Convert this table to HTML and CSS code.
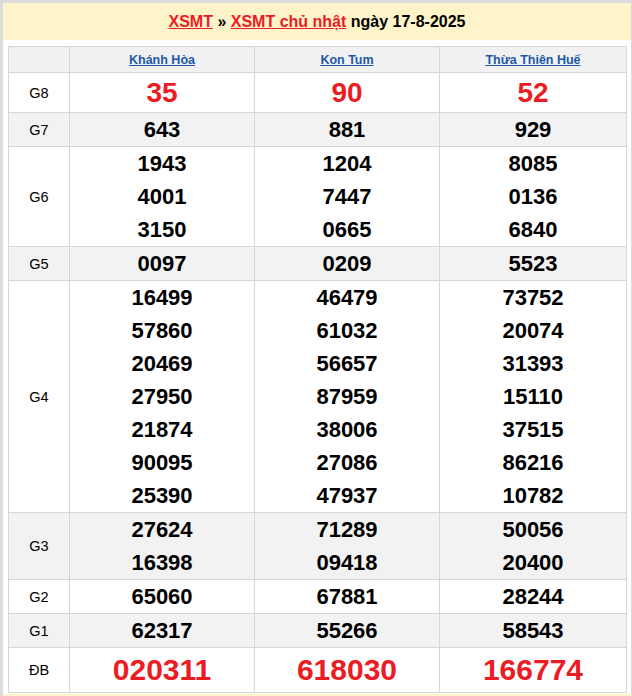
FILE: index.html
```html
<!DOCTYPE html>
<html lang="vi">
<head>
<meta charset="utf-8">
<title>XSMT chủ nhật 17-8-2025</title>
<link rel="stylesheet" href="styles.css">
</head>
<body>
<div class="box">
  <h2 class="title"><a href="#">XSMT</a> » <a href="#">XSMT chủ nhật</a> ngày 17-8-2025</h2>
  <table class="kq">
    <colgroup><col class="c-label"><col class="c-prov"><col class="c-prov"><col class="c-last"></colgroup>
    <thead>
      <tr class="head"><th></th><th><a href="#">Khánh Hòa</a></th><th><a href="#">Kon Tum</a></th><th><a href="#">Thừa Thiên Huế</a></th></tr>
    </thead>
    <tbody>
      <tr class="g8"><td class="lbl">G8</td><td><div>35</div></td><td><div>90</div></td><td><div>52</div></td></tr>
      <tr class="alt"><td class="lbl">G7</td><td><div>643</div></td><td><div>881</div></td><td><div>929</div></td></tr>
      <tr><td class="lbl">G6</td><td><div>1943</div><div>4001</div><div>3150</div></td><td><div>1204</div><div>7447</div><div>0665</div></td><td><div>8085</div><div>0136</div><div>6840</div></td></tr>
      <tr class="alt"><td class="lbl">G5</td><td><div>0097</div></td><td><div>0209</div></td><td><div>5523</div></td></tr>
      <tr><td class="lbl">G4</td>
        <td><div>16499</div><div>57860</div><div>20469</div><div>27950</div><div>21874</div><div>90095</div><div>25390</div></td>
        <td><div>46479</div><div>61032</div><div>56657</div><div>87959</div><div>38006</div><div>27086</div><div>47937</div></td>
        <td><div>73752</div><div>20074</div><div>31393</div><div>15110</div><div>37515</div><div>86216</div><div>10782</div></td></tr>
      <tr class="alt"><td class="lbl">G3</td><td><div>27624</div><div>16398</div></td><td><div>71289</div><div>09418</div></td><td><div>50056</div><div>20400</div></td></tr>
      <tr><td class="lbl">G2</td><td><div>65060</div></td><td><div>67881</div></td><td><div>28244</div></td></tr>
      <tr class="alt"><td class="lbl">G1</td><td><div>62317</div></td><td><div>55266</div></td><td><div>58543</div></td></tr>
      <tr class="db"><td class="lbl">ĐB</td><td><div>020311</div></td><td><div>618030</div></td><td><div>166774</div></td></tr>
    </tbody>
  </table>
  <div class="foot"></div>
</div>
</body>
</html>
```

FILE: styles.css
```css
html, body {
  margin: 0;
  padding: 0;
}
body {
  background: #dcdcdc;
  font-family: "Liberation Sans", Arial, sans-serif;
  padding: 3px 1px 0 3px;
}
.box {
  background: #fff;
  height: 700px;
}
.title {
  margin: 0;
  height: 37px;
  line-height: 37px;
  background: #fff4c9;
  text-align: center;
  font-size: 16px;
  font-weight: bold;
  color: #000;
}
.title a {
  color: #ec1c24;
  text-decoration: underline;
}
.kq {
  margin: 6px 5px 0 5px;
  width: 618px;
  table-layout: fixed;
  border-collapse: collapse;
  border: 1px solid #d6d6d6;
}
.c-label { width: 61px; }
.c-prov { width: 185px; }
.c-last { width: 187px; }
.kq th, .kq td {
  border: 1px solid #d6d6d6;
  padding: 0;
  text-align: center;
  vertical-align: middle;
}
.head th {
  background: #f1f1f1;
  height: 25px;
  font-size: 12.5px;
  font-weight: bold;
}
.head a {
  color: #1c5aa6;
  text-decoration: underline;
}
.kq td div {
  font-size: 22px;
  font-weight: bold;
  line-height: 33px;
  color: #000;
}
.kq td.lbl {
  font-size: 14.5px;
  color: #000;
}
.alt td {
  background: #f2f2f2;
}
.g8 td div {
  font-size: 28px;
  line-height: 39px;
  color: #ec1c24;
}
.db td div {
  font-size: 30px;
  line-height: 44px;
  color: #ec1c24;
}
.foot {
  margin-top: 1px;
  height: 30px;
  background: #fff4c9;
}
```
